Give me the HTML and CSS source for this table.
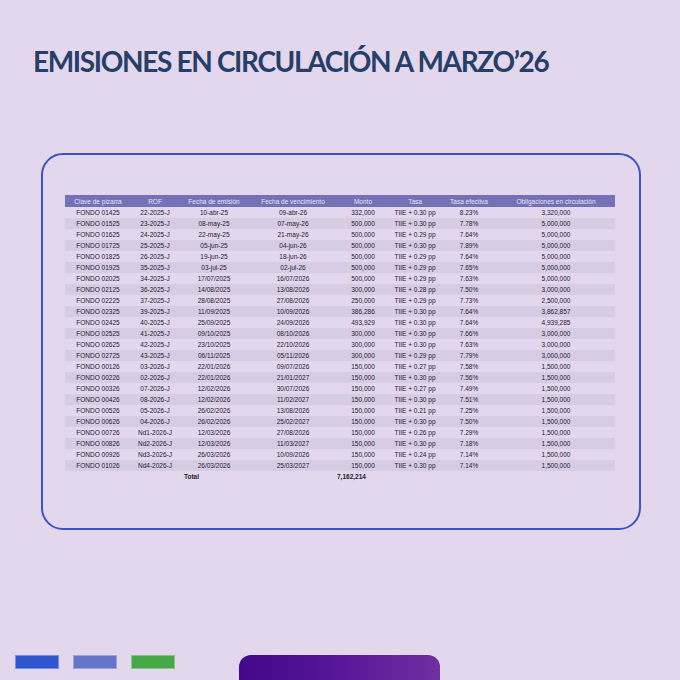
FILE: index.html
```html
<!DOCTYPE html>
<html lang="es">
<head>
<meta charset="utf-8">
<title>Emisiones en circulación</title>
<link rel="stylesheet" href="styles.css">
</head>
<body>
<div class="page">
  <h1 class="title">EMISIONES EN CIRCULACIÓN A MARZO’26</h1>
  <div class="card">
    <table class="tbl">
      <colgroup>
        <col class="c1"><col class="c2"><col class="c3"><col class="c4"><col class="c5"><col class="c6"><col class="c7"><col class="c8">
      </colgroup>
      <thead>
        <tr><th>Clave de pizarra</th><th>ROF</th><th>Fecha de emisión</th><th>Fecha de vencimiento</th><th>Monto</th><th>Tasa</th><th>Tasa efectiva</th><th>Obligaciones en circulación</th></tr>
      </thead>
      <tbody>
        <tr><td>FONDO 01425</td><td>22-2025-J</td><td>10-abr-25</td><td>09-abr-26</td><td>332,000</td><td>TIIE + 0.30 pp</td><td>8.23%</td><td>3,320,000</td></tr>
        <tr><td>FONDO 01525</td><td>23-2025-J</td><td>08-may-25</td><td>07-may-26</td><td>500,000</td><td>TIIE + 0.30 pp</td><td>7.78%</td><td>5,000,000</td></tr>
        <tr><td>FONDO 01625</td><td>24-2025-J</td><td>22-may-25</td><td>21-may-26</td><td>500,000</td><td>TIIE + 0.29 pp</td><td>7.64%</td><td>5,000,000</td></tr>
        <tr><td>FONDO 01725</td><td>25-2025-J</td><td>05-jun-25</td><td>04-jun-26</td><td>500,000</td><td>TIIE + 0.30 pp</td><td>7.89%</td><td>5,000,000</td></tr>
        <tr><td>FONDO 01825</td><td>26-2025-J</td><td>19-jun-25</td><td>18-jun-26</td><td>500,000</td><td>TIIE + 0.29 pp</td><td>7.64%</td><td>5,000,000</td></tr>
        <tr><td>FONDO 01925</td><td>35-2025-J</td><td>03-jul-25</td><td>02-jul-26</td><td>500,000</td><td>TIIE + 0.29 pp</td><td>7.65%</td><td>5,000,000</td></tr>
        <tr><td>FONDO 02025</td><td>34-2025-J</td><td>17/07/2025</td><td>16/07/2026</td><td>500,000</td><td>TIIE + 0.29 pp</td><td>7.63%</td><td>5,000,000</td></tr>
        <tr><td>FONDO 02125</td><td>36-2025-J</td><td>14/08/2025</td><td>13/08/2026</td><td>300,000</td><td>TIIE + 0.28 pp</td><td>7.50%</td><td>3,000,000</td></tr>
        <tr><td>FONDO 02225</td><td>37-2025-J</td><td>28/08/2025</td><td>27/08/2026</td><td>250,000</td><td>TIIE + 0.29 pp</td><td>7.73%</td><td>2,500,000</td></tr>
        <tr><td>FONDO 02325</td><td>39-2025-J</td><td>11/09/2025</td><td>10/09/2026</td><td>386,286</td><td>TIIE + 0.30 pp</td><td>7.64%</td><td>3,862,857</td></tr>
        <tr><td>FONDO 02425</td><td>40-2025-J</td><td>25/09/2025</td><td>24/09/2026</td><td>493,929</td><td>TIIE + 0.30 pp</td><td>7.64%</td><td>4,939,285</td></tr>
        <tr><td>FONDO 02525</td><td>41-2025-J</td><td>09/10/2025</td><td>08/10/2026</td><td>300,000</td><td>TIIE + 0.30 pp</td><td>7.66%</td><td>3,000,000</td></tr>
        <tr><td>FONDO 02625</td><td>42-2025-J</td><td>23/10/2025</td><td>22/10/2026</td><td>300,000</td><td>TIIE + 0.30 pp</td><td>7.63%</td><td>3,000,000</td></tr>
        <tr><td>FONDO 02725</td><td>43-2025-J</td><td>06/11/2025</td><td>05/11/2026</td><td>300,000</td><td>TIIE + 0.29 pp</td><td>7.79%</td><td>3,000,000</td></tr>
        <tr><td>FONDO 00126</td><td>03-2026-J</td><td>22/01/2026</td><td>09/07/2026</td><td>150,000</td><td>TIIE + 0.27 pp</td><td>7.58%</td><td>1,500,000</td></tr>
        <tr><td>FONDO 00226</td><td>02-2026-J</td><td>22/01/2026</td><td>21/01/2027</td><td>150,000</td><td>TIIE + 0.30 pp</td><td>7.56%</td><td>1,500,000</td></tr>
        <tr><td>FONDO 00326</td><td>07-2026-J</td><td>12/02/2026</td><td>30/07/2026</td><td>150,000</td><td>TIIE + 0.27 pp</td><td>7.49%</td><td>1,500,000</td></tr>
        <tr><td>FONDO 00426</td><td>08-2026-J</td><td>12/02/2026</td><td>11/02/2027</td><td>150,000</td><td>TIIE + 0.30 pp</td><td>7.51%</td><td>1,500,000</td></tr>
        <tr><td>FONDO 00526</td><td>05-2026-J</td><td>26/02/2026</td><td>13/08/2026</td><td>150,000</td><td>TIIE + 0.21 pp</td><td>7.25%</td><td>1,500,000</td></tr>
        <tr><td>FONDO 00626</td><td>04-2026-J</td><td>26/02/2026</td><td>25/02/2027</td><td>150,000</td><td>TIIE + 0.30 pp</td><td>7.50%</td><td>1,500,000</td></tr>
        <tr><td>FONDO 00726</td><td>Nd1-2026-J</td><td>12/03/2026</td><td>27/08/2026</td><td>150,000</td><td>TIIE + 0.26 pp</td><td>7.29%</td><td>1,500,000</td></tr>
        <tr><td>FONDO 00826</td><td>Nd2-2026-J</td><td>12/03/2026</td><td>11/03/2027</td><td>150,000</td><td>TIIE + 0.30 pp</td><td>7.18%</td><td>1,500,000</td></tr>
        <tr><td>FONDO 00926</td><td>Nd3-2026-J</td><td>26/03/2026</td><td>10/09/2026</td><td>150,000</td><td>TIIE + 0.24 pp</td><td>7.14%</td><td>1,500,000</td></tr>
        <tr><td>FONDO 01026</td><td>Nd4-2026-J</td><td>26/03/2026</td><td>25/03/2027</td><td>150,000</td><td>TIIE + 0.30 pp</td><td>7.14%</td><td>1,500,000</td></tr>
      </tbody>
      <tfoot>
        <tr><td></td><td></td><td class="total-label">Total</td><td></td><td class="total-val">7,162,214</td><td></td><td></td><td></td></tr>
      </tfoot>
    </table>
  </div>
  <div class="footer">
    <span class="chip chip-blue"></span>
    <span class="chip chip-periwinkle"></span>
    <span class="chip chip-green"></span>
    <span class="tab"></span>
  </div>
</div>
</body>
</html>
```

FILE: styles.css
```css
html, body {
  margin: 0;
  padding: 0;
}
body {
  background: #e3d7ed;
  width: 680px;
  height: 680px;
  overflow: hidden;
}
.page {
  display: flex;
  flex-direction: column;
  height: 680px;
}
.title {
  margin: 44px 0 0 33px;
  font-family: "Lato", "Open Sans", sans-serif;
  font-weight: 700;
  font-size: 28px;
  line-height: 34px;
  color: #273f68;
  letter-spacing: -1.35px;
  white-space: nowrap;
}
.card {
  margin: 75px 0 0 41px;
  width: 574px;
  height: 333px;
  border: 2px solid #3a55c2;
  border-radius: 22px;
  padding: 40px 0 0 22px;
  box-sizing: content-box;
}
.tbl {
  border-collapse: collapse;
  table-layout: fixed;
  width: 550px;
  font-family: "Liberation Sans", Arial, sans-serif;
  font-size: 6.5px;
  color: #24212f;
}
.c1 { width: 66px; }
.c2 { width: 48px; }
.c3 { width: 70px; }
.c4 { width: 88px; }
.c5 { width: 52px; }
.c6 { width: 52px; }
.c7 { width: 56px; }
.c8 { width: 118px; }
.tbl th {
  background: #7571b6;
  color: #e9e5f7;
  font-weight: 400;
  height: 12px;
  padding: 0;
  text-align: center;
  white-space: nowrap;
}
.tbl td {
  height: 11px;
  padding: 0;
  text-align: center;
  white-space: nowrap;
}
.tbl tbody tr:nth-child(even) td {
  background: #d6cce4;
}
.tbl tfoot td {
  font-weight: 700;
  color: #1f1d2b;
}
.tbl .total-label {
  text-align: left;
  padding-left: 5px;
}
.tbl .total-val {
  text-align: left;
  padding-left: 0;
}
.footer {
  display: flex;
  align-items: flex-start;
  margin-top: auto;
  height: 25px;
  padding-left: 15px;
}
.chip {
  width: 44px;
  height: 14px;
  box-sizing: border-box;
  border: 1px solid rgba(255, 255, 255, 0.35);
  margin-right: 14px;
}
.chip-blue { background: #2f55cf; }
.chip-periwinkle { background: #6575c8; }
.chip-green { background: #47a847; margin-right: 64px; }
.tab {
  width: 201px;
  height: 40px;
  border-radius: 12px 12px 0 0;
  background: linear-gradient(90deg, #42078b 0%, #5a1a98 55%, #7030a0 100%);
}
```
